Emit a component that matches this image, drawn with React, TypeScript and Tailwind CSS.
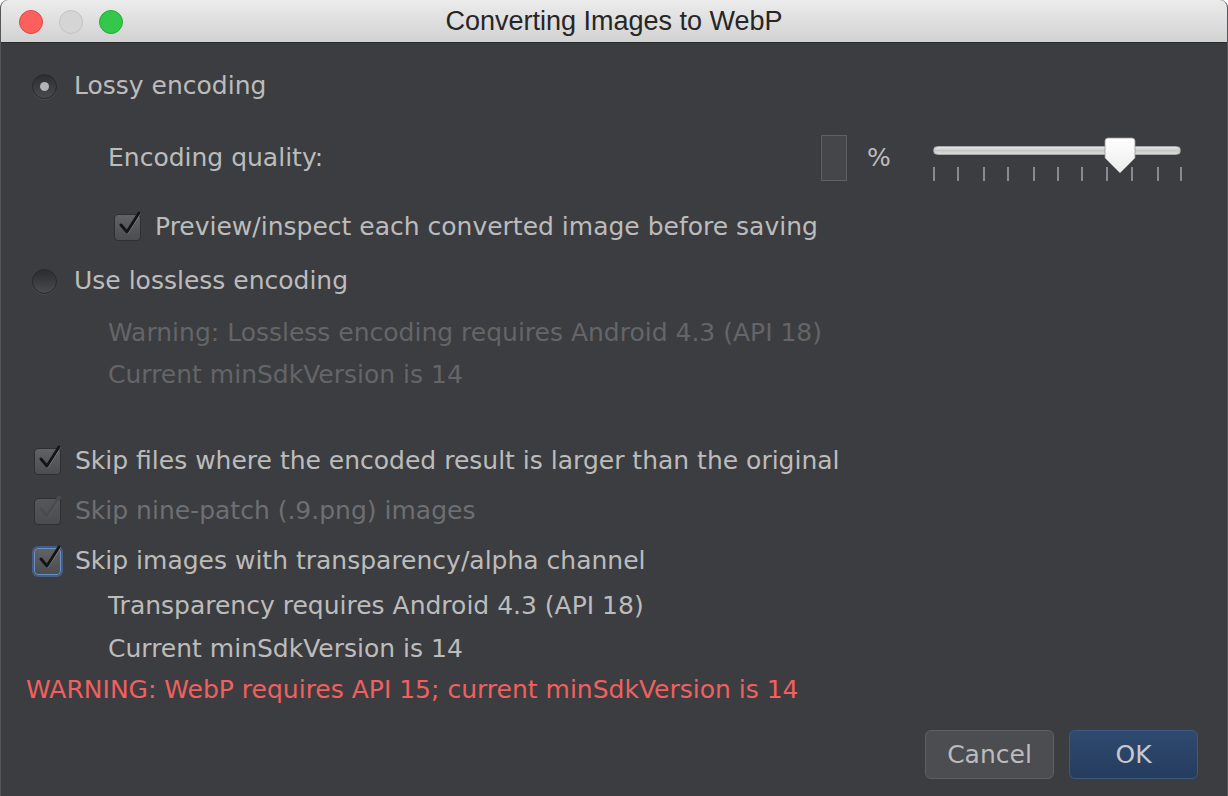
import React from "react";

const font = { fontFamily: '"DejaVu Sans", "Liberation Sans", sans-serif' };

const Radio: React.FC<{ selected?: boolean }> = ({ selected }) => (
  <div className="w-[25px] h-[25px] rounded-full bg-gradient-to-b from-[#2c2d30] to-[#4a4b4e] border border-[#28292b] shadow-[0_1px_0_rgba(255,255,255,0.08)] flex items-center justify-center">
    {selected && <div className="w-[9px] h-[9px] rounded-full bg-[#b4b4b4]" />}
  </div>
);

const Checkbox: React.FC<{ disabled?: boolean; focused?: boolean }> = ({
  disabled,
  focused,
}) => (
  <div
    className={`relative w-[27px] h-[27px] rounded-[4px] border ${
      focused
        ? "border-[#6a8fc4] shadow-[0_0_0_2px_rgba(80,120,180,0.55)]"
        : "border-[#2e2f31]"
    } ${
      disabled
        ? "bg-gradient-to-b from-[#55575a] to-[#4a4c4f]"
        : "bg-gradient-to-b from-[#606265] to-[#4b4d50]"
    }`}
  >
    <svg
      viewBox="0 0 28 28"
      className="absolute left-[2px] -top-[6px] w-[28px] h-[28px] overflow-visible"
    >
      <path
        d="M4 16 L10 23 L22 4"
        fill="none"
        stroke={disabled ? "#7a7b7d" : "#f0f0f0"}
        strokeWidth="2"
        strokeLinecap="round"
        strokeLinejoin="round"
        transform="translate(0.6 0.8)"
        opacity="0.5"
      />
      <path
        d="M4 16 L10 23 L22 4"
        fill="none"
        stroke={disabled ? "#4a4b4d" : "#151515"}
        strokeWidth="3"
        strokeLinecap="round"
        strokeLinejoin="round"
      />
    </svg>
  </div>
);

const Slider: React.FC = () => {
  const ticks = [932, 956, 982, 1006, 1032, 1056, 1080, 1105, 1130, 1156, 1179];
  return (
    <div className="relative w-[250px] h-[46px]">
      <div className="absolute left-0 top-[11px] w-[248px] h-[9px] rounded-full bg-gradient-to-b from-[#e8e8e8] via-[#c8c8c8] to-[#dcdcdc] border border-[#a8a8a8]" />
      {ticks.map((x) => (
        <div
          key={x}
          className="absolute top-[32px] w-[1.5px] h-[14px] bg-[#8a8a8a]"
          style={{ left: x - 932 }}
        />
      ))}
      <svg
        viewBox="0 0 32 38"
        className="absolute left-[171px] top-[2px] w-[32px] h-[38px]"
      >
        <defs>
          <linearGradient id="thumb" x1="0" y1="0" x2="0" y2="1">
            <stop offset="0" stopColor="#ffffff" />
            <stop offset="1" stopColor="#ececec" />
          </linearGradient>
        </defs>
        <path
          d="M4 1 H28 Q31 1 31 4 V21 L16 36 L1 21 V4 Q1 1 4 1 Z"
          fill="url(#thumb)"
          stroke="#9a9a9a"
          strokeWidth="0.8"
        />
      </svg>
    </div>
  );
};

export default function App() {
  return (
    <div
      className="w-[1228px] h-[796px] bg-[#3c3d40] flex flex-col overflow-hidden rounded-t-[8px] border-x border-[#55565a]"
      style={font}
    >
      {/* title bar */}
      <div className="relative h-[43px] shrink-0 bg-gradient-to-b from-[#ececec] to-[#d2d2d2] border-b border-[#2a2b2d] flex items-center justify-center">
        <div className="absolute left-[18px] top-[10px] flex gap-[16px]">
          <div className="w-[24px] h-[24px] rounded-full bg-[#fc605c] border border-[#df4744]" />
          <div className="w-[24px] h-[24px] rounded-full bg-[#d5d5d5] border border-[#c3c3c3]" />
          <div className="w-[24px] h-[24px] rounded-full bg-[#34c84a] border border-[#27aa35]" />
        </div>
        <span className="text-[27px] text-[#262626]" style={{ fontFamily: '"Liberation Sans", "DejaVu Sans", sans-serif' }}>
          Converting Images to WebP
        </span>
      </div>

      <div className="flex flex-col pl-[31px] pr-[44px] text-[25px] text-[#bcbcbc]">
        <div className="mt-[23px] h-[40px] flex items-center gap-[17px]">
          <Radio selected />
          <span>Lossy encoding</span>
        </div>

        <div className="mt-[29px] h-[46px] flex items-center">
          <span className="ml-[76px]">Encoding quality:</span>
          <div className="ml-auto w-[26px] h-[46px] border border-[#5e5f62] bg-[#45464a]" />
          <span className="ml-[20px] w-[20px]">%</span>
          <div className="ml-[46px]">
            <Slider />
          </div>
        </div>

        <div className="mt-[31px] h-[30px] flex items-center">
          <div className="ml-[82px]">
            <Checkbox />
          </div>
          <span className="ml-[14px]">Preview/inspect each converted image before saving</span>
        </div>

        <div className="mt-[24px] h-[30px] flex items-center gap-[17px]">
          <Radio />
          <span>Use lossless encoding</span>
        </div>

        <div className="text-[#646568] ml-[76px]">
          <div className="mt-[22px] h-[30px] flex items-center">
            Warning: Lossless encoding requires Android 4.3 (API 18)
          </div>
          <div className="mt-[12px] h-[30px] flex items-center">
            Current minSdkVersion is 14
          </div>
        </div>

        <div className="mt-[56px] h-[30px] flex items-center">
          <div className="ml-[2px]">
            <Checkbox />
          </div>
          <span className="ml-[14px]">Skip files where the encoded result is larger than the original</span>
        </div>
        <div className="mt-[20px] h-[30px] flex items-center text-[#6e6f72]">
          <div className="ml-[2px]">
            <Checkbox disabled />
          </div>
          <span className="ml-[14px]">Skip nine-patch (.9.png) images</span>
        </div>
        <div className="mt-[20px] h-[30px] flex items-center">
          <div className="ml-[2px]">
            <Checkbox focused />
          </div>
          <span className="ml-[14px]">Skip images with transparency/alpha channel</span>
        </div>

        <div className="ml-[76px]">
          <div className="mt-[15px] h-[30px] flex items-center">
            Transparency requires Android 4.3 (API 18)
          </div>
          <div className="mt-[13px] h-[30px] flex items-center">
            Current minSdkVersion is 14
          </div>
        </div>

        <div className="-ml-[6px] mt-[11px] h-[30px] flex items-center text-[#f0605f]">
          WARNING: WebP requires API 15; current minSdkVersion is 14
        </div>

        <div className="mt-[25px] -mr-[15px] flex justify-end gap-[15px]">
          <button className="w-[129px] h-[49px] rounded-[6px] bg-[#4b4d50] border border-[#5d5f62] text-[#bcbcbc] text-[25px]">
            Cancel
          </button>
          <button className="w-[129px] h-[49px] rounded-[6px] bg-gradient-to-b from-[#2f4a70] to-[#253d5e] border border-[#3e5a80] text-[#c8c8c8] text-[25px]">
            OK
          </button>
        </div>
      </div>
    </div>
  );
}
